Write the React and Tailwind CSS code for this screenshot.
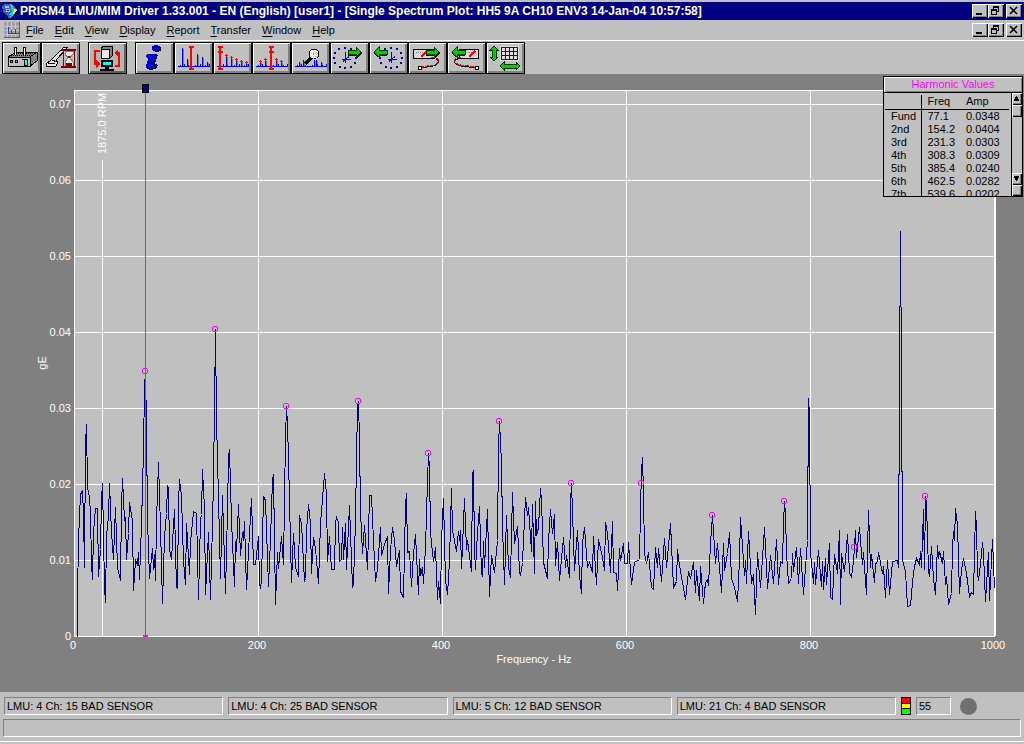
import React, { useState } from "react";
import clsx from "clsx";

// Spectrum trace: x offset from 0 Hz, height above the zero line
const SPECTRUM = [
  [3, 0], [3, 41], [4, 95], [5, 121], [6, 142], [8, 146], [9, 121], [10, 69], [11, 192], [12, 212],
  [13, 149], [15, 139], [16, 123], [17, 72], [18, 57], [19, 104], [21, 128], [23, 128], [24, 60], [26, 87],
  [27, 137], [28, 153], [30, 50], [31, 34], [32, 100], [34, 121], [35, 153], [37, 104], [39, 77], [40, 105],
  [41, 129], [43, 69], [46, 56], [47, 130], [48, 158], [49, 138], [50, 116], [51, 119], [52, 77], [54, 103],
  [55, 134], [58, 115], [59, 46], [61, 76], [63, 72], [64, 84], [65, 57], [67, 112], [69, 186], [70, 249],
  [71, 265], [72, 209], [73, 116], [75, 58], [78, 88], [79, 67], [80, 82], [81, 56], [82, 116], [84, 174],
  [86, 109], [88, 33], [90, 99], [92, 123], [93, 151], [94, 148], [95, 87], [97, 77], [100, 127], [102, 49],
  [103, 48], [104, 133], [105, 157], [107, 141], [109, 76], [111, 52], [112, 113], [115, 62], [116, 94], [119, 125],
  [122, 123], [124, 37], [126, 117], [127, 122], [128, 167], [130, 128], [131, 42], [134, 104], [136, 37], [138, 112],
  [139, 158], [140, 229], [141, 307], [142, 216], [144, 139], [146, 58], [148, 141], [151, 43], [153, 126], [154, 179],
  [155, 187], [157, 116], [160, 50], [161, 95], [162, 85], [164, 132], [166, 81], [168, 104], [169, 96], [170, 115],
  [172, 47], [174, 85], [177, 138], [179, 72], [181, 72], [184, 100], [185, 53], [186, 48], [187, 56], [189, 140],
  [191, 136], [194, 50], [196, 97], [198, 157], [199, 162], [201, 32], [203, 84], [204, 68], [207, 100], [209, 72],
  [211, 199], [212, 230], [213, 212], [214, 178], [215, 136], [217, 54], [219, 103], [221, 69], [224, 60], [225, 121],
  [227, 113], [230, 55], [231, 58], [232, 106], [234, 132], [236, 113], [237, 63], [239, 99], [241, 88], [244, 53],
  [246, 113], [250, 163], [252, 143], [253, 75], [255, 100], [257, 67], [260, 67], [261, 114], [262, 119], [264, 114],
  [265, 75], [267, 77], [268, 109], [269, 77], [271, 113], [272, 67], [275, 131], [278, 49], [279, 53], [281, 116],
  [282, 178], [283, 229], [284, 235], [285, 196], [286, 126], [288, 83], [290, 111], [293, 67], [295, 141], [297, 141],
  [299, 96], [301, 55], [303, 68], [306, 109], [307, 81], [310, 92], [313, 100], [314, 43], [316, 86], [318, 109],
  [320, 96], [322, 70], [325, 86], [326, 45], [329, 39], [331, 132], [332, 143], [333, 84], [335, 85], [337, 50],
  [339, 83], [341, 102], [344, 42], [345, 77], [346, 61], [348, 69], [349, 53], [351, 89], [353, 156], [354, 183],
  [355, 169], [356, 103], [359, 75], [361, 89], [363, 37], [364, 55], [366, 33], [367, 96], [369, 138], [371, 56],
  [373, 42], [375, 76], [377, 148], [378, 106], [382, 85], [384, 105], [385, 96], [386, 106], [387, 68], [389, 113],
  [390, 138], [392, 87], [393, 96], [397, 65], [398, 163], [399, 166], [400, 86], [401, 67], [403, 104], [405, 130],
  [407, 63], [408, 60], [409, 95], [410, 69], [413, 127], [415, 40], [417, 81], [420, 64], [423, 96], [424, 189],
  [425, 215], [427, 173], [428, 109], [430, 52], [432, 121], [434, 69], [436, 59], [438, 144], [440, 93], [443, 110],
  [445, 65], [446, 61], [448, 74], [451, 139], [453, 121], [454, 129], [457, 85], [458, 132], [460, 63], [461, 135],
  [462, 101], [464, 109], [466, 148], [467, 136], [469, 74], [473, 58], [474, 96], [476, 127], [478, 103], [480, 122],
  [481, 71], [483, 94], [485, 56], [489, 99], [491, 69], [492, 81], [495, 59], [496, 133], [497, 153], [499, 96],
  [500, 66], [503, 106], [505, 61], [507, 43], [508, 94], [510, 109], [513, 69], [515, 74], [518, 64], [519, 100],
  [522, 52], [524, 97], [528, 79], [530, 66], [531, 114], [533, 103], [536, 64], [538, 115], [539, 64], [542, 63],
  [543, 46], [545, 88], [546, 76], [549, 93], [550, 73], [553, 73], [554, 94], [557, 52], [560, 74], [565, 77],
  [566, 127], [567, 166], [568, 179], [569, 143], [570, 83], [572, 73], [574, 84], [577, 49], [579, 47], [581, 89],
  [583, 69], [584, 88], [587, 55], [590, 98], [592, 69], [596, 113], [599, 49], [602, 55], [603, 87], [605, 71],
  [608, 54], [611, 37], [614, 65], [616, 58], [619, 74], [621, 44], [622, 66], [625, 36], [626, 70], [629, 33],
  [631, 54], [633, 57], [634, 51], [636, 93], [638, 121], [641, 73], [643, 93], [647, 44], [649, 93], [650, 66],
  [653, 83], [655, 104], [657, 58], [660, 49], [663, 35], [665, 76], [666, 119], [670, 61], [671, 76], [672, 53],
  [674, 105], [677, 53], [679, 62], [681, 22], [683, 84], [686, 49], [690, 109], [693, 48], [696, 81], [699, 53],
  [702, 97], [704, 52], [706, 75], [708, 73], [709, 113], [710, 135], [711, 123], [712, 83], [714, 53], [717, 58],
  [718, 83], [719, 65], [722, 89], [724, 53], [726, 88], [729, 42], [733, 96], [734, 238], [735, 221], [736, 84],
  [739, 53], [740, 74], [741, 52], [744, 86], [747, 50], [748, 75], [749, 47], [751, 78], [752, 52], [755, 93],
  [756, 39], [758, 37], [760, 82], [763, 63], [765, 106], [766, 32], [767, 83], [770, 65], [773, 102], [775, 64],
  [777, 59], [779, 75], [781, 106], [782, 79], [785, 109], [787, 83], [788, 72], [789, 84], [792, 42], [794, 126],
  [796, 69], [797, 82], [800, 54], [801, 73], [803, 74], [804, 84], [808, 63], [809, 70], [811, 39], [813, 76],
  [815, 42], [818, 75], [823, 76], [824, 69], [825, 250], [826, 405], [827, 256], [828, 76], [831, 65], [833, 30],
  [836, 31], [838, 54], [840, 70], [842, 78], [845, 72], [846, 85], [847, 69], [849, 127], [850, 67], [851, 140],
  [852, 133], [854, 66], [855, 60], [857, 90], [859, 58], [861, 42], [863, 91], [864, 78], [865, 85], [868, 73],
  [869, 85], [871, 52], [872, 60], [874, 32], [877, 43], [878, 89], [879, 105], [880, 96], [881, 128], [883, 112],
  [885, 43], [887, 66], [889, 78], [892, 63], [895, 40], [897, 44], [899, 42], [901, 125], [902, 109], [903, 64],
  [904, 56], [906, 72], [908, 94], [909, 83], [911, 35], [914, 84], [915, 36], [918, 97], [920, 48],
];

const MARKERS = [
  [71, 265], [141, 307], [212, 230], [284, 235], [354, 183], [425, 215],
  [497, 153], [567, 153], [638, 121], [710, 135], [780, 89], [851, 140],
];

const HARMONICS = [
  ["Fund", "77.1", "0.0348"],
  ["2nd", "154.2", "0.0404"],
  ["3rd", "231.3", "0.0303"],
  ["4th", "308.3", "0.0309"],
  ["5th", "385.4", "0.0240"],
  ["6th", "462.5", "0.0282"],
  ["7th", "539.6", "0.0202"],
];

const MENUS = ["File", "Edit", "View", "Display", "Report", "Transfer", "Window", "Help"];

const ALARMS = [
  "LMU: 4 Ch: 15 BAD SENSOR",
  "LMU: 4 Ch: 25 BAD SENSOR",
  "LMU: 5 Ch: 12 BAD SENSOR",
  "LMU: 21 Ch: 4 BAD SENSOR",
];

const BASELINE = "M4 24.5H36M6.5 23V25M10.5 22V25M14.5 23V25M21.5 23V25M26.5 22V25M31.5 23V25M35.5 22V25";

const plus = (x, y) => `M${x - 1} ${y + 0.5}h3M${x + 0.5} ${y - 1}v3`;

// Blue line spectrum with a grey drop shadow, bars given as [x, top]
function MiniSpectrum({ bars }) {
  const lines = bars.map(([x, top]) => `M${x + 0.5} 24V${top}`).join("");
  return (
    <g fill="none">
      <path d={lines} transform="translate(1 1)" stroke="#808080" />
      <path d={lines + BASELINE} stroke="#0000ff" />
    </g>
  );
}

function Arrow({ x, y, left }) {
  return (
    <g transform={`translate(${x} ${y})${left ? " scale(-1 1)" : ""}`}>
      <path d="M0 -1H9V-4L14 1L9 6V4H0Z" fill="#000" />
      <path d="M0 -2H8V-5L13 0L8 5V2H0Z" fill="#00d000" stroke="#004000" />
    </g>
  );
}

function Clock({ x }) {
  return (
    <g>
      {[0, 30, 60, 90, 120, 150, 180, 210, 240, 270, 300, 330].map((a) => (
        <rect
          key={a}
          x={Math.round(x - 1 + 11 * Math.cos((a * Math.PI) / 180))}
          y={Math.round(15 + 10 * Math.sin((a * Math.PI) / 180))}
          width="2"
          height="2"
          fill="#0000a0"
        />
      ))}
      <path
        d={`M${x + 0.5} 10V21M${x - 3} 17.5H${x + 6}M${x - 2} 19.5L${x + 4} 14.5`}
        fill="none"
        stroke="#0000ff"
      />
    </g>
  );
}

const TOOLS = [
  {
    label: "Plant",
    art: (
      <g stroke="#000">
        <path d="M6 15L14 10H35V19L28 24H6Z" fill="#808080" />
        <path d="M6 15H28V24H6Z" fill="#c0c0c0" />
        <path d="M28 15L35 10M9 13H30M12 11H33" fill="none" strokeDasharray="1 1" />
        <path d="M12 13V5H14V13M21 13V5H23V13" fill="#fff" />
        <path d="M8 18H10V20H8ZM13 18H15V20H13Z" fill="#00ffff" />
        <path d="M20 17H25V24L22 23V17Z" fill="#00ffff" />
      </g>
    ),
  },
  {
    label: "Clean up",
    art: (
      <g>
        <path d="M27 5L23 5L10 18L5 22V24H15L17 20L15 18Z" fill="#e8e8e8" stroke="#000" />
        <path d="M7 21L14 22M11 18L16 20" stroke="#000" />
        <path d="M22 8H34V24H22Z" fill="#c0c0c0" />
        <path d="M24 9H32V12L29 16L32 20V24H24V20L27 16L24 12Z" fill="#e8e8e8" stroke="#808080" />
        <path d="M25 21H31V24H25ZM27 14H29V16H27Z" fill="#800000" />
        <path d="M20 8H35M20 25H35" stroke="#800000" strokeWidth="2" />
        <path d="M22.5 9V24M33.5 9V24" stroke="#800000" />
      </g>
    ),
  },
  {
    label: "Transfer data",
    gapBefore: true,
    pressed: true,
    art: (
      <g>
        <path d="M13 7L15 4H24V14L22 16H13Z" fill="#808080" stroke="#000" />
        <path d="M13 7H21V16H13Z" fill="#e8e8e8" stroke="#000" />
        <path d="M14 19H24V24H14Z" fill="#00ffff" stroke="#000" strokeWidth="2" />
        <path d="M17 25H21V27H17Z" fill="#000" />
        <path d="M12 27H25V28H12Z" fill="#fff" stroke="#000" />
        <path d="M12 9H7V22H9M28 11H31V24H27" fill="none" stroke="#ff0000" strokeWidth="2" />
        <path d="M8 18L12 22L8 26ZM30 7L26 11L30 15Z" fill="#ff0000" />
      </g>
    ),
  },
  {
    label: "Information",
    gapBefore: true,
    art: (
      <g>
        <path d="M13 13H23L19 24L23 23L22 26L16 28L12 27V24L15 16H12Z" fill="#000" />
        <ellipse cx="22" cy="7" rx="4" ry="3" fill="#000" />
        <path d="M12 12H22L18 23L22 22L21 25L15 27L11 26V23L14 15H11Z" fill="#0000c8" />
        <ellipse cx="21" cy="6" rx="4" ry="3" fill="#0000c8" />
      </g>
    ),
  },
  {
    label: "Single cursor",
    art: (
      <g fill="none">
        <MiniSpectrum bars={[[8, 6], [13, 17], [23, 12], [28, 15], [33, 20]]} />
        <path d="M15 5H20M17 4V27M15 27H20" stroke="#ff0000" strokeWidth="2" />
      </g>
    ),
  },
  {
    label: "Harmonic cursor",
    art: (
      <g fill="none">
        <MiniSpectrum bars={[[13, 14], [18, 16], [23, 18], [28, 19], [33, 21]]} />
        <path d="M5 5H10M7 4V27M5 27H10M5 10H10" stroke="#ff0000" strokeWidth="2" />
        <path d={plus(13, 13) + plus(18, 15) + plus(23, 17) + plus(28, 19) + plus(33, 20)} stroke="#ff0000" />
      </g>
    ),
  },
  {
    label: "Sideband cursor",
    art: (
      <g fill="none">
        <MiniSpectrum bars={[[8, 20], [13, 18], [24, 18], [29, 20]]} />
        <path d="M17 5H22M19 4V27M17 27H22M17 10H22" stroke="#ff0000" strokeWidth="2" />
        <path d={plus(13, 17) + plus(8, 19) + plus(24, 17) + plus(29, 19)} stroke="#ff0000" />
      </g>
    ),
  },
  {
    label: "Zoom",
    art: (
      <g fill="none">
        <MiniSpectrum bars={[[8, 20], [12, 18], [23, 18], [25, 18], [30, 20]]} />
        <path d="M20 16L14 22" stroke="#000" strokeWidth="3" />
        <circle cx="23" cy="12" r="5" fill="#fff" stroke="#000" />
        <path d="M20 11H27M20 14H27M22 8V17M25 8V17" stroke="#b0b0b0" strokeDasharray="1 1" />
      </g>
    ),
  },
  { label: "Next in time", art: <><Clock x={15} /><Arrow x={18} y={10} /></> },
  { label: "Previous in time", art: <><Clock x={22} /><Arrow x={18} y={10} left /></> },
  {
    label: "Next point",
    art: (
      <g fill="none">
        <path d="M5 7H26V16H5Z" fill="#d8d8d8" stroke="#000" />
        <path d="M8 10H17" stroke="#808080" strokeDasharray="1 1" />
        <path d="M13 15L19 9" stroke="#ff0000" strokeWidth="2" />
        <path d="M23 17C30 16 32 19 29 22C25 26 19 24 14 26" stroke="#000" />
        <path d="M23 16C30 15 32 18 29 21C25 25 19 23 14 25" stroke="#ff0000" strokeDasharray="4 1" />
        <circle cx="12" cy="26" r="2" fill="#fff" stroke="#000" />
        <Arrow x={18} y={10} />
      </g>
    ),
  },
  {
    label: "Previous point",
    art: (
      <g fill="none">
        <path d="M12 7H31V16H12Z" fill="#d8d8d8" stroke="#000" />
        <path d="M20 10H29" stroke="#808080" strokeDasharray="1 1" />
        <path d="M22 15L28 9" stroke="#ff0000" strokeWidth="2" />
        <path d="M14 17C6 16 6 21 11 23C17 26 22 24 29 26" stroke="#000" />
        <path d="M14 16C6 15 6 20 11 22C17 25 22 23 29 25" stroke="#ff0000" strokeDasharray="4 1" />
        <circle cx="30" cy="26" r="2" fill="#fff" stroke="#000" />
        <Arrow x={18} y={10} left />
      </g>
    ),
  },
  {
    label: "Scale axes",
    art: (
      <g>
        <path d="M8 4L12 8H10V15H12L8 19L4 15H6V8H4Z" fill="#00d000" stroke="#003000" />
        <path d="M14 24L18 20V22H30V20L34 24L30 28V26H18V28Z" fill="#00d000" stroke="#003000" />
        <path d="M14 4H33V19H14Z" fill="#e0e0e0" />
        <path
          d="M15.5 5.5H31.5V17.5H15.5ZM19.5 5V18M23.5 5V18M27.5 5V18M15 9.5H32M15 13.5H32"
          fill="none"
          stroke="#0000ff"
        />
      </g>
    ),
  },
];

const raised =
  "bg-[#c0c0c0] shadow-[inset_1px_1px_0_#fff,inset_-1px_-1px_0_#000,inset_-2px_-2px_0_#808080]";

function WindowButtons() {
  return (
    <div className="flex pr-0.5">
      <button aria-label="Minimize" className={clsx("h-3.5 w-4", raised)}>
        <svg viewBox="0 0 16 14" className="block" shapeRendering="crispEdges">
          <path d="M4 9H10V11H4Z" />
        </svg>
      </button>
      <button aria-label="Restore" className={clsx("h-3.5 w-4", raised)}>
        <svg viewBox="0 0 16 14" className="block" shapeRendering="crispEdges">
          <path d="M5 2H11V8H9V7H10V4H6V5H5ZM3 5H9V11H3ZM4 7V10H8V7Z" fillRule="evenodd" />
        </svg>
      </button>
      <button aria-label="Close" className={clsx("ml-0.5 h-3.5 w-4", raised)}>
        <svg viewBox="0 0 16 14" className="block">
          <path d="M4 3L11 10M11 3L4 10" stroke="#000" strokeWidth="1.6" />
        </svg>
      </button>
    </div>
  );
}

function TitleBar() {
  return (
    <header className="mt-0.5 flex h-[18px] items-center bg-[#000080] pl-0.5 text-white">
      <svg className="h-4 w-4" viewBox="0 0 16 16" shapeRendering="crispEdges">
        <path d="M0 3L3 1H9L12 4V11L6 13L1 9Z" fill="#4060c0" />
        <path d="M8 1L12 3L15 7L11 13L8 15L5 13L10 9Z" fill="#00e0e0" />
        <path d="M11 4L12 3L14 6L13 8Z" fill="#ff4040" />
        <path d="M12 6L15 7L11 12Z" fill="#ffff00" />
        <path d="M5 12L9 12L7 16Z" fill="#00a000" />
        <path d="M3 3H7V5H3ZM4 6H8V9H4Z" fill="#b0c0ff" />
        <path d="M5 7H7V8H5Z" fill="#000080" />
      </svg>
      <h1 className="flex-1 truncate pl-0.5 text-[12px] leading-4 font-bold">
        PRISM4 LMU/MIM Driver 1.33.001 - EN (English) [user1] - [Single Spectrum Plot: HH5 9A CH10 ENV3 14-Jan-04 10:57:58]
      </h1>
      <WindowButtons />
    </header>
  );
}

function MenuBar() {
  return (
    <div className="flex h-5 items-center pl-1">
      <svg className="h-4 w-4" viewBox="0 0 16 16" shapeRendering="crispEdges">
        <path d="M0 0H16V16H0Z" fill="#a0a0a0" />
        <path
          d="M3.5 0V16M7.5 0V16M11.5 0V16M0 4.5H16M0 8.5H16M0 12.5H16"
          stroke="#c8c8c8"
        />
        <path d="M4.5 12V5M7.5 12V8M11.5 12V7M4 11.5H15" fill="none" stroke="#3030e0" />
        <path d="M0 15.5H16M15.5 0V16" stroke="#606060" />
      </svg>
      <nav className="flex flex-1 gap-[11px] pl-1.5 text-[11px] leading-4">
        {MENUS.map((name) => (
          <button key={name}>
            <span className="underline underline-offset-2">{name[0]}</span>
            {name.slice(1)}
          </button>
        ))}
      </nav>
      <WindowButtons />
    </div>
  );
}

function Toolbar() {
  return (
    <div className="flex border-t border-white pt-px pl-0.5">
      {TOOLS.map((tool) => (
        <button
          key={tool.label}
          aria-label={tool.label}
          className={clsx(
            "h-8 w-[39px] border border-black",
            tool.gapBefore && "ml-2",
            tool.pressed
              ? "bg-[#b4b4b4] shadow-[inset_1px_1px_0_#fff,inset_-2px_-2px_0_#606060]"
              : "bg-[#c0c0c0] shadow-[inset_1px_1px_0_#fff,inset_-2px_-2px_0_#808080]"
          )}
        >
          <svg className="block w-full" viewBox="1 1 37 30" shapeRendering="crispEdges">
            {tool.art}
          </svg>
        </button>
      ))}
    </div>
  );
}

function SpectrumPlot() {
  const points = SPECTRUM.map(([x, h]) => `${x},${546 - h}`).join(" ");

  return (
    <svg className="block w-full" viewBox="0 0 1024 618" fontSize="11" fill="#fff">
      <g transform="translate(74 16)">
        <g shapeRendering="crispEdges">
          <rect width="921" height="546" fill="#c0c0c0" />
          {/* Grid */}
          {[1, 2, 3, 4, 5, 6, 7].map((n) => (
            <rect key={n} y={546 - n * 76} width="921" height="1" />
          ))}
          {[1, 2, 3, 4].map((n) => (
            <rect key={n} x={n * 184} width="1" height="546" />
          ))}
          <rect width="921" height="1" />
          <rect width="1" height="547" />
          <rect y="546" width="921" height="1" />
          <rect x="920" width="2" height="546" />
          <rect x="28" y="70" width="1" height="476" />
        </g>

        <polyline
          points={points}
          transform="translate(0.5 0.5)"
          fill="none"
          stroke="#000080"
          shapeRendering="crispEdges"
        />

        {/* Cursor and harmonic markers */}
        <g shapeRendering="crispEdges">
          <rect x="71" y="3" width="1" height="543" fill="#ff00ff" />
          <rect x="69" y="545" width="5" height="2" fill="#ff00ff" />
          <rect x="68" y="-6" width="7" height="9" fill="#000" />
          <rect x="69" y="-5" width="5" height="7" fill="#000080" />
          {MARKERS.map(([x, h]) => (
            <path
              key={x}
              transform={`translate(${x - 3} ${543 - h})`}
              d="M1 0H5V1H1ZM1 5H5V6H1ZM0 1H1V5H0ZM5 1H6V5H5Z"
              fill="#ff00ff"
            />
          ))}
        </g>

        {/* Axis labels */}
        <text x="-3" y="550" textAnchor="end">0</text>
        {[1, 2, 3, 4, 5, 6, 7].map((n) => (
          <text key={n} x="-3" y={550 - n * 76} textAnchor="end">
            {`0.0${n}`}
          </text>
        ))}
        {[0, 200, 400, 600, 800, 1000].map((hz) => (
          <text key={hz} x={hz * 0.92 - 1} y="559" textAnchor="middle">
            {hz}
          </text>
        ))}
        <text x="460" y="573" textAnchor="middle">Frequency - Hz</text>
        <text transform="translate(-28 273) rotate(-90)" textAnchor="middle">gE</text>
        <text transform="translate(32 64) rotate(-90)">1875.0 RPM</text>
      </g>
    </svg>
  );
}

function HarmonicPanel() {
  return (
    <section className="absolute top-0.5 right-px w-[140px] border border-black bg-[#c0c0c0] text-[11px]">
      <h2 className="border-b border-black text-center leading-[15px] text-[#ff00ff] shadow-[inset_1px_1px_0_#fff,inset_-1px_-1px_0_#808080]">
        Harmonic Values
      </h2>
      <div className="flex h-[103px]">
        <div className="flex-1 overflow-hidden pt-0.5 pr-0.5 pl-px">
          <table className="w-full border-collapse text-left leading-[13px]">
            <thead>
              <tr className="h-3.5 border-b border-black">
                <th className="w-9 border-r border-black p-0"></th>
                <th className="w-[39px] p-0 pl-1.5 font-normal">Freq</th>
                <th className="p-0 pl-1.5 font-normal">Amp</th>
              </tr>
            </thead>
            <tbody>
              {HARMONICS.map(([name, freq, amp]) => (
                <tr key={name}>
                  <td className="border-r border-black p-0 pl-1.5">{name}</td>
                  <td className="p-0 pl-1.5">{freq}</td>
                  <td className="p-0 pl-1.5">{amp}</td>
                </tr>
              ))}
            </tbody>
          </table>
        </div>
        {/* Scrollbar */}
        <div className="flex w-[11px] flex-col border-l border-black">
          <button aria-label="Scroll up" className={clsx("h-3", raised)}>
            <svg viewBox="0 0 10 12" className="block" shapeRendering="crispEdges">
              <path d="M4 3H5V4H6V6H7V8H2V6H3V4H4Z" />
            </svg>
          </button>
          <div className={clsx("h-3", raised)} />
          <div className="flex-1" />
          <button aria-label="Scroll down" className={clsx("h-3", raised)}>
            <svg viewBox="0 0 10 12" className="block" shapeRendering="crispEdges">
              <path d="M2 3H7V5H6V7H5V8H4V7H3V5H2Z" />
            </svg>
          </button>
          <div className={clsx("h-[11px]", raised)} />
        </div>
      </div>
    </section>
  );
}

const sunken = "border border-t-[#808080] border-l-[#808080] border-r-white border-b-white";

function StatusBar() {
  return (
    <footer className="pt-[5px] text-[11px]">
      <div className="flex items-center gap-[5px] pr-[47px] pl-1">
        {ALARMS.map((alarm) => (
          <div key={alarm} className={clsx("h-[18px] flex-1 truncate pl-0.5 leading-4", sunken)}>
            {alarm}
          </div>
        ))}
        <div className="flex h-[18px] w-2.5 flex-col gap-px border border-black bg-black">
          <span className="flex-1 bg-[#ff0000]" />
          <span className="flex-1 bg-[#ffff00]" />
          <span className="flex-1 bg-[#00ff00]" />
        </div>
        <div className={clsx("h-[18px] w-[35px] pl-0.5 leading-4", sunken)}>55</div>
        <span className="ml-1 h-[17px] w-[17px] rounded-full bg-[#707070]" />
      </div>
      <div className={clsx("mx-[3px] mt-1 h-[18px]", sunken)} />
      <div className="mt-1 h-[3px] border-t border-white" />
    </footer>
  );
}

export default function App() {
  const [showHarmonics] = useState(true);

  return (
    <div className="flex min-h-screen flex-col bg-[#c0c0c0] font-['Liberation_Sans',Arial,sans-serif] text-black">
      <TitleBar />
      <MenuBar />
      <Toolbar />
      <main className="relative flex-1 bg-[#808080]">
        <SpectrumPlot />
        {showHarmonics && <HarmonicPanel />}
      </main>
      <StatusBar />
    </div>
  );
}
